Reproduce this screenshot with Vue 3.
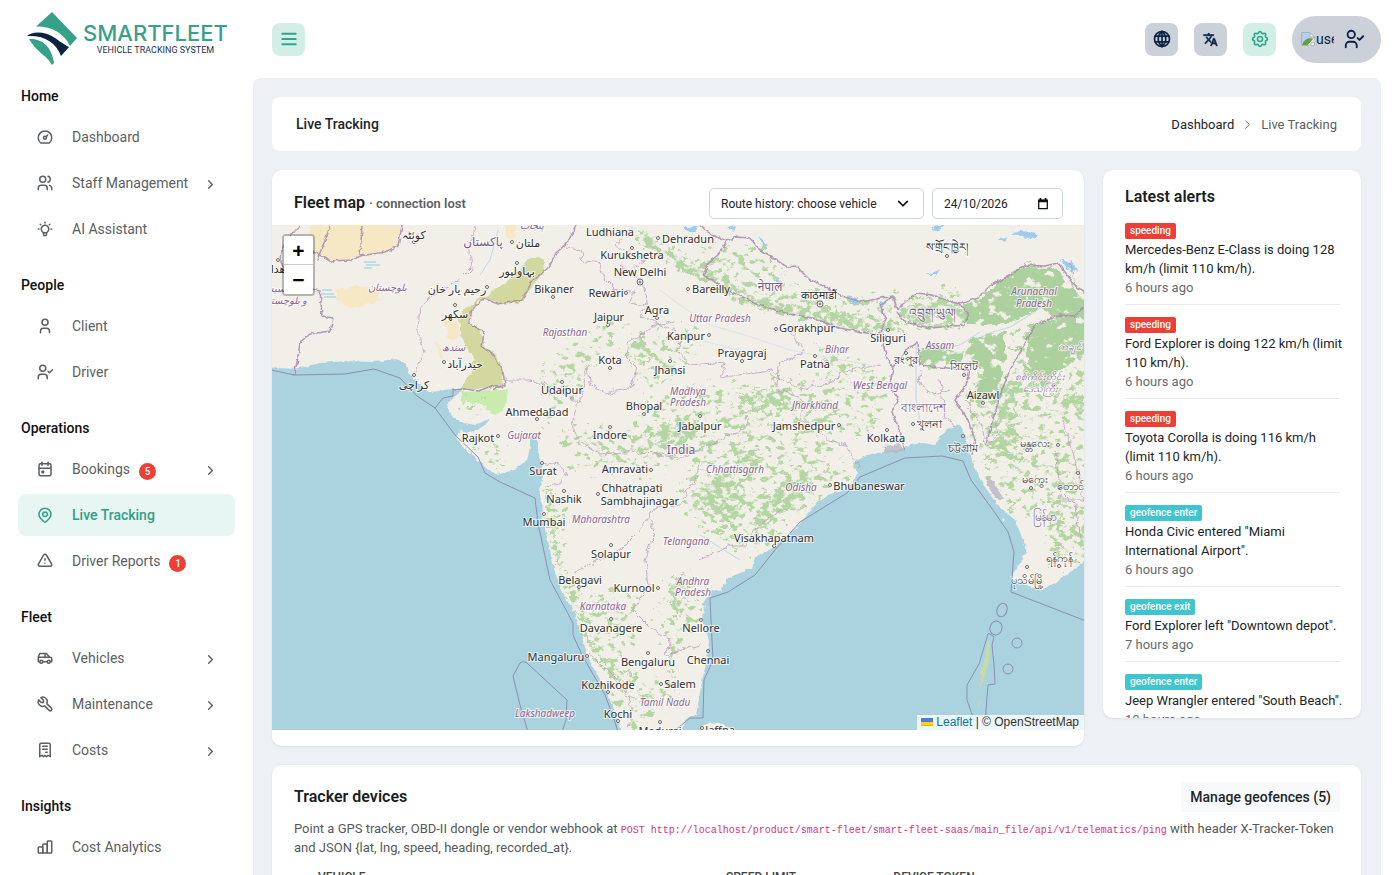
<script setup>
import { ref } from 'vue'

const paths = {
  gauge: ['M10 13a2 2 0 1 0 4 0a2 2 0 1 0 -4 0', 'M13.45 11.55l2.05 -2.05', 'M6.4 20a9 9 0 1 1 11.2 0z'],
  users: ['M5 7a4 4 0 1 0 8 0a4 4 0 1 0 -8 0', 'M3 21v-2a4 4 0 0 1 4 -4h4a4 4 0 0 1 4 4v2', 'M16 3.13a4 4 0 0 1 0 7.75', 'M21 21v-2a4 4 0 0 0 -3 -3.85'],
  bulb: ['M3 12h1m8 -9v1m8 8h1m-15.4 -6.4l.7 .7m12.1 -.7l-.7 .7', 'M9 16a5 5 0 1 1 6 0a3.5 3.5 0 0 0 -1 3a2 2 0 0 1 -4 0a3.5 3.5 0 0 0 -1 -3', 'M9.7 17l4.6 0'],
  user: ['M8 7a4 4 0 1 0 8 0a4 4 0 0 0 -8 0', 'M6 21v-2a4 4 0 0 1 4 -4h4a4 4 0 0 1 4 4v2'],
  userCheck: ['M5 7a4 4 0 1 0 8 0a4 4 0 1 0 -8 0', 'M3 21v-2a4 4 0 0 1 4 -4h4a4 4 0 0 1 4 4v2', 'M16 11l2 2l4 -4'],
  calendar: ['M4 7a2 2 0 0 1 2 -2h12a2 2 0 0 1 2 2v12a2 2 0 0 1 -2 2h-12a2 2 0 0 1 -2 -2z', 'M16 3v4', 'M8 3v4', 'M4 11h16', 'M8 15h2v2h-2z'],
  pin: ['M9 11a3 3 0 1 0 6 0a3 3 0 1 0 -6 0', 'M17.657 16.657l-4.243 4.243a2 2 0 0 1 -2.827 0l-4.244 -4.243a8 8 0 1 1 11.314 0z'],
  alert: ['M12 9v2m0 4v.01', 'M5 19h14a2 2 0 0 0 1.84 -2.75l-7.1 -12.25a2 2 0 0 0 -3.5 0l-7.1 12.25a2 2 0 0 0 1.75 2.75'],
  car: ['M5 17a2 2 0 1 0 4 0a2 2 0 1 0 -4 0', 'M15 17a2 2 0 1 0 4 0a2 2 0 1 0 -4 0', 'M5 17h-2v-6l2 -5h9l4 5h1a2 2 0 0 1 2 2v4h-2m-4 0h-6m-6 -6h15m-6 0v-5'],
  tool: ['M7 10h3v-3l-3.5 -3.5a6 6 0 0 1 8 8l6 6a2 2 0 0 1 -3 3l-6 -6a6 6 0 0 1 -8 -8l3.5 3.5'],
  receipt: ['M5 21v-16a2 2 0 0 1 2 -2h10a2 2 0 0 1 2 2v16l-3 -2l-2 2l-2 -2l-2 2l-2 -2l-3 2', 'M9 7h6', 'M9 11h6', 'M13 15h2'],
  bars: ['M3 13a1 1 0 0 1 1 -1h4a1 1 0 0 1 1 1v7h-5a1 1 0 0 1 -1 -1z', 'M9 9a1 1 0 0 1 1 -1h4a1 1 0 0 1 1 1v11h-6z', 'M15 5a1 1 0 0 1 1 -1h4a1 1 0 0 1 1 1v14a1 1 0 0 1 -1 1h-5z'],
  gear: ['M10.325 4.317c.426 -1.756 2.924 -1.756 3.35 0a1.724 1.724 0 0 0 2.573 1.066c1.543 -.94 3.31 .826 2.37 2.37a1.724 1.724 0 0 0 1.065 2.572c1.756 .426 1.756 2.924 0 3.35a1.724 1.724 0 0 0 -1.066 2.573c.94 1.543 -.826 3.31 -2.37 2.37a1.724 1.724 0 0 0 -2.572 1.065c-.426 1.756 -2.924 1.756 -3.35 0a1.724 1.724 0 0 0 -2.573 -1.066c-1.543 .94 -3.31 -.826 -2.37 -2.37a1.724 1.724 0 0 0 -1.065 -2.572c-1.756 -.426 -1.756 -2.924 0 -3.35a1.724 1.724 0 0 0 1.066 -2.573c-.94 -1.543 .826 -3.31 2.37 -2.37c1 .608 2.296 .07 2.572 -1.065z', 'M9 12a3 3 0 1 0 6 0a3 3 0 1 0 -6 0'],
  globe: ['M3 12a9 9 0 1 0 18 0a9 9 0 1 0 -18 0', 'M12 3v18', 'M4 8.500h16', 'M4 15.500h16', 'M12 3c-6 5 -6 13 0 18', 'M12 3c6 5 6 13 0 18']
}

const menu = [
  { title: 'Home', items: [{ label: 'Dashboard', icon: 'gauge' }, { label: 'Staff Management', icon: 'users', sub: true }, { label: 'AI Assistant', icon: 'bulb' }] },
  { title: 'People', items: [{ label: 'Client', icon: 'user' }, { label: 'Driver', icon: 'userCheck' }] },
  { title: 'Operations', items: [{ label: 'Bookings', icon: 'calendar', sub: true, count: 5 }, { label: 'Live Tracking', icon: 'pin', active: true }, { label: 'Driver Reports', icon: 'alert', count: 1 }] },
  { title: 'Fleet', items: [{ label: 'Vehicles', icon: 'car', sub: true }, { label: 'Maintenance', icon: 'tool', sub: true }, { label: 'Costs', icon: 'receipt', sub: true }] },
  { title: 'Insights', items: [{ label: 'Cost Analytics', icon: 'bars' }] }
]

const alerts = [
  { type: 'speeding', text: 'Mercedes-Benz E-Class is doing 128 km/h (limit 110 km/h).', ago: '6 hours ago' },
  { type: 'speeding', text: 'Ford Explorer is doing 122 km/h (limit 110 km/h).', ago: '6 hours ago' },
  { type: 'speeding', text: 'Toyota Corolla is doing 116 km/h (limit 110 km/h).', ago: '6 hours ago' },
  { type: 'geofence enter', text: 'Honda Civic entered "Miami International Airport".', ago: '6 hours ago' },
  { type: 'geofence exit', text: 'Ford Explorer left "Downtown depot".', ago: '7 hours ago' },
  { type: 'geofence enter', text: 'Jeep Wrangler entered "South Beach".', ago: '10 hours ago' }
]

const historyDate = ref('24/10/2026')

// [name, centre x, centre y, dot x, dot y]
const cities = [
  ['Ludhiana', 610, 232], ['Dehradun', 688, 239, 658, 238], ['Kurukshetra', 632, 255, 632, 248],
  ['New Delhi', 640, 272], ['Bikaner', 554, 289, 553, 297], ['Rewari', 606, 293, 626, 293],
  ['Bareilly', 711, 289, 688, 289], ['Jaipur', 609, 317, 608, 325], ['Agra', 657, 310, 657, 318],
  ['Gorakhpur', 807, 328, 776, 329], ['Kanpur', 686, 336, 709, 335], ['Prayagraj', 742, 353, 742, 361],
  ['Kota', 610, 360, 610, 368], ['Jhansi', 670, 370, 670, 361], ['Patna', 815, 364, 815, 356],
  ['Siliguri', 888, 338, 888, 330], ['Udaipur', 562, 390, 562, 382], ['Ahmedabad', 537, 412, 537, 419],
  ['Bhopal', 644, 406, 644, 414], ['Indore', 610, 435, 610, 427], ['Jabalpur', 700, 426, 700, 416],
  ['Jamshedpur', 804, 426, 839, 425], ['Aizawl', 983, 395, 983, 403], ['Kolkata', 886, 438, 887, 430],
  ['Rajkot', 478, 438, 498, 436], ['Surat', 543, 471, 542, 463], ['Amravati', 625, 469, 651, 470],
  ['Nashik', 564, 499, 564, 491], ['Chhatrapati', 632, 488], ['Sambhajinagar', 640, 501, 598, 494],
  ['Mumbai', 544, 522, 544, 514], ['Solapur', 611, 554, 611, 545], ['Belagavi', 580, 580, 579, 587],
  ['Kurnool', 634, 588, 658, 588], ['Davanagere', 611, 628, 611, 619], ['Nellore', 701, 628, 701, 620],
  ['Mangaluru', 556, 657, 587, 656], ['Bengaluru', 648, 662, 648, 653], ['Chennai', 708, 660, 708, 651],
  ['Kozhikode', 608, 685, 608, 692], ['Salem', 680, 684, 661, 684], ['Kochi', 618, 714, 618, 721],
  ['Madurai', 660, 731, 660, 722], ['Jaffna', 720, 730, 702, 728], ['Bhubaneswar', 869, 486, 830, 485],
  ['Visakhapatnam', 774, 538, 774, 546],
  ['کوئٹہ', 414, 235, 414, 242], ['ملتان', 528, 243, 512, 242], ['بہاولپور', 517, 271, 517, 263],
  ['رحیم یار خان', 457, 289, 487, 287], ['سکھر', 455, 314, 455, 305], ['حیدرآباد', 465, 364, 444, 362],
  ['کراچی', 414, 385, 414, 375], ['هدا', 278, 269, 278, 260],
  ['काठमाडौं', 819, 295], ['ས་གྲོང་ཁྱེར།', 947, 247, 947, 256],
  ['রংপুর', 906, 360, 906, 353], ['সিলেট', 964, 366, 964, 375], ['খুলনা', 929, 424, 913, 424],
  ['চট্টগ্রাম', 963, 448, 963, 436], ['မန္တလေး', 1035, 443, 1058, 445], ['မကွေး', 1035, 479, 1031, 488],
  ['တောင်', 1070, 486, 1078, 473], ['ရန်ကုန်', 1059, 558, 1059, 566], ['ပုသိမ်မြို့', 1027, 580, 1027, 567]
]

const regions = [
  ['Rajasthan', 565, 332], ['Uttar Pradesh', 720, 318], ['Bihar', 837, 349], ['Assam', 940, 345],
  ['West Bengal', 880, 385], ['Jharkhand', 815, 405], ['Madhya', 688, 391], ['Pradesh', 688, 402],
  ['Gujarat', 524, 435], ['Maharashtra', 601, 519], ['Telangana', 686, 541], ['Andhra', 693, 581],
  ['Pradesh', 693, 592], ['Karnataka', 603, 606], ['Tamil Nadu', 665, 702], ['Lakshadweep', 545, 713],
  ['Odisha', 801, 487], ['Chhattisgarh', 735, 469], ['Arunachal', 1034, 291], ['Pradesh', 1034, 303],
  ['بلوچستان', 387, 287], ['سندھ', 453, 347], ['سیستان', 268, 288], ['و بلوچستان', 284, 300], ['پنجاب', 532, 225],
  ['ကချင်', 1070, 346], ['စစ်ကိုင်းတိုင်း', 1040, 376], ['ဒေသကြီး', 1040, 388]
]

const countries = [
  ['India', 681, 450], ['پاکستان', 483, 242], ['नेपाल', 770, 287], ['འབྲུག་ཡུལ།', 932, 313],
  ['বাংলাদেশ', 923, 408], ['မြန်မာ', 1044, 517]
]

const sea = 'M262 367L295 369L320 363L347 361L373 362L397 359L406 364L408 373L417 382L430 392L452 389L464 390L458 394L450 400L446 405L452 416L463 423L476 425L490 418L483 427L470 433L460 430L456 437L463 447L480 462L492 472L500 474L514 470L527 460L530 447L530 437L534 434L537 443L540 460L542 467L543 480L539 490L542 503L543 520L550 550L555 573L563 593L575 613L582 637L588 657L598 677L607 690L613 710L622 731L683 731L685 720L696 715L698 705L700 693L703 676L707 660L709 640L703 620L705 600L712 590L720 592L728 578L752 568L755 557L773 548L797 527L817 503L827 495L847 490L858 473L853 463L867 455L883 452L897 450L910 445L923 443L935 445L942 435L949 428L960 425L966 438L970 453L973 465L982 483L1000 507L1015 520L1022 537L1027 550L1020 563L1010 578L1025 585L1040 590L1055 583L1077 567L1094 555V740H262V367Z'

const forest = [
  'M965 306L982 296L1000 282L1025 265L1050 266L1062 275L1075 290L1090 305L1090 320L1060 318L1040 308L1018 320L990 324L968 325Z',
  'M920 346L945 348L965 352L960 365L930 368L920 362Z',
  'M975 335L1005 334L1005 355L1000 385L990 400L970 400L985 370L965 360Z',
  'M1030 325L1060 318L1090 316V350L1060 370L1045 385L1025 375Z'
]
const wooded = [
  'M633 226L650 233L672 250L700 264L720 277L745 291L780 302L800 305L840 312L880 320L900 322L900 335L860 330L820 322L780 314L740 302L700 282L668 262L640 242Z',
  'M905 315L915 300L940 296L970 312L968 325L930 328L905 325Z',
  'M1000 385L1020 380L1016 430L1022 465L1008 460L990 410Z',
  'M1062 400L1075 390L1090 410H1062Z', 'M1050 500L1060 500L1065 545H1055Z', 'M1076 520L1090 520V560H1078Z',
  'M580 625L600 650L618 672L640 670L628 685L610 672L594 655Z',
  'M712 475L728 470L738 490L745 500L735 525L722 525L705 505L698 495Z', 'M735 452L760 448L758 470L738 468Z',
  'M780 486L800 470L812 478L800 505L775 515L760 530L755 515Z', 'M985 440L1010 435L1008 462L996 455Z',
  'M545 490L555 500L560 560L580 600L592 630L580 620L565 585L550 540Z', 'M640 440L680 415L700 430L680 450Z',
  'M630 342L645 335L650 360L632 358ZM740 395L780 390L790 408L750 410Z', 'M672 582L682 575L680 610L672 620Z'
]
const sparse = [
  'M640 405L700 388L760 385L840 372L855 390L830 450L800 490L775 540L745 550L700 530L680 500L690 455L640 440Z',
  'M700 245L760 250L800 290L880 300L960 290L965 320L880 325L780 310L700 280Z',
  'M545 480L560 500L560 560L575 600L590 640L625 675L640 725L618 705L596 665L565 585L548 530Z',
  'M665 582L690 570L700 600L685 650L640 690L625 725L650 728L680 680L660 625Z',
  'M545 370L605 320L625 325L600 360L560 400L545 440Z', 'M630 340L700 330L670 380L640 390Z',
  'M560 430L640 430L690 460L640 470L570 470Z', 'M640 600L620 670L580 630L590 590Z',
  'M960 370H1040V520L1010 510L980 460Z', 'M1040 480H1090V560H1050Z', 'M1010 330H1090V480H1030Z',
  'M820 340L890 385L870 440L830 430Z', 'M470 440L500 445L505 470L485 458Z', 'M460 400L490 402L485 412L460 412Z',
  'M735 485L800 465L860 460L840 488L800 510L750 550Z'
]
const borders = [
  'M300 226L290 236L282 247L281 262L290 284L320 291L322 316L333 318L330 331L310 334L300 342L298 358L294 375',
  'M294 240L330 261L350 260L360 256L385 252L398 246L402 226',
  'M330 226L326 238L317 260', 'M362 226L360 256', 'M492 390L505 385L503 372L493 354L482 347L484 332L474 327L469 323L472 310L484 298L497 304L521 301L533 280L548 268L556 253L567 243L577 225',
  'M452 390L465 389L478 391L492 386L503 387',
  'M700 226L712 235L727 241L735 237L750 238L760 250L776 260L787 267L796 266L810 280L820 284L842 296L862 302L876 299L893 296L897 310L906 301L918 293L932 295L952 302L960 304L978 298L990 286L1010 275L1025 265L1045 266L1058 263L1075 285L1090 297',
  'M727 241L718 255L709 262L703 275L730 291L758 305L790 314L812 318L840 328L878 335L886 320L880 305L892 297',
  'M897 312L905 322L930 328L965 325L968 312L958 303',
  'M886 335L883 345L888 360L893 368L890 385L898 400L892 412L899 430L905 450', 'M893 367L908 348L918 343L920 365L948 368L970 370L966 385L955 400L968 420L975 440L972 455',
  'M986 445L990 430L1000 395L1010 370L1027 340L1035 325L1060 315L1075 316L1090 300'
]
const states = [
  'M566 248L580 250L583 261L600 264L606 280L617 291L634 292L630 302L646 305L640 316L660 325L683 335L676 350L690 365L725 362L720 378L770 370L800 390L840 380L838 372L880 365',
  'M646 305L645 284L634 275L620 265', 'M676 322L655 325L630 340L625 355L636 366L632 388L605 393L590 383L588 365L580 402L572 420L577 440L600 455L640 452L680 458L720 440L745 428L748 415',
  'M503 380L530 380L555 388L565 395L583 405', 'M540 462L560 465L567 475L560 485L545 487', 'M575 572L600 560L620 550L640 530L655 508L680 505L695 480L700 460',
  'M648 520L655 530L645 560L648 585L632 610L650 628L670 640L665 655L700 645', 'M700 560L712 555L730 545L745 545L760 525L780 510', 'M860 468L845 445L830 440L800 420L805 400L780 390L768 372',
  'M790 330L803 352L778 365L777 385', 'M590 655L610 672L625 690L632 710L628 728', 'M920 370L918 383L935 395L950 390', 'M1070 260L1075 285', 'M940 380L945 420L955 425', 'M1000 410L995 440L985 445L982 425L965 400',
  'M1055 450L1060 490L1075 505L1080 540M1060 500H1084L1070 440L1062 420', 'M475 226L470 250L472 268L460 280L435 295L420 305L418 330L424 352L414 375', 'M632 230L615 245L634 255L645 262L620 275'
]
const maritime = [
  'M262 368L294 375L345 374L374 369L400 378L417 396L435 408L455 435L478 457L485 473L500 482L535 498L538 523L550 580L573 623L573 635L582 655L605 695L613 716L618 732',
  'M435 408L443 398L453 396V388', 'M673 732L690 718H703L704 680L713 660L711 620L710 598L728 592L755 575L775 550L800 522L847 493L860 477L905 458L942 456L963 461L971 480L993 510L1008 532L1014 552L1011 592L1086 621',
  'M520 663L513 676L520 705L528 732M520 663Q524 660 528 664L567 700L566 720L562 732',
  'M988 634L979 664L967 685L967 700L974 720L985 722L988 685L995 684L994 665L992 645L994 637Q988 632 988 634'
]
</script>

<template>
  <div class="shell">
    <aside class="sidebar">
      <a class="brand" href="#" aria-label="SmartFleet">
        <svg class="brand-mark" viewBox="0 0 51 53" aria-hidden="true">
          <path fill="#36a189" d="M25 0L50 26L43 34C37 21 24 14 9 14.500Z" />
          <path fill="#0b2245" d="M0 24C5 19 18 19 28 26C35 31 40 34 42 35L34 44C29 30 17 23 0 24Z" />
          <path fill="#36a189" d="M2 27C15 26 25 35 27 51L25 53C20 43 12 43 2 27Z" />
        </svg>
        <span class="brand-words">
          <span class="brand-name">SMARTFLEET</span>
          <span class="brand-tag">VEHICLE TRACKING SYSTEM</span>
        </span>
      </a>
      <nav>
        <section v-for="group in menu" :key="group.title" class="group">
          <h2>{{ group.title }}</h2>
          <a v-for="item in group.items" :key="item.label" href="#" class="item" :class="{ active: item.active }">
            <svg class="icon" viewBox="0 0 24 24"><path v-for="d in paths[item.icon]" :key="d" :d="d" /></svg>
            <span>{{ item.label }}</span>
            <b v-if="item.count" class="count">{{ item.count }}</b>
            <svg v-if="item.sub" class="caret" viewBox="0 0 24 24"><path d="M8 4l8 8l-8 8" /></svg>
          </a>
        </section>
      </nav>
    </aside>

    <div class="page">
      <header class="topbar">
        <button class="square mint" aria-label="Toggle menu">
          <svg class="burger" viewBox="0 0 24 24"><path d="M2 4h20M2 12h20M2 20h20" /></svg>
        </button>
        <div class="tools">
          <button class="square" aria-label="Website"><svg class="icon big" viewBox="0 0 24 24"><path v-for="d in paths.globe" :key="d" :d="d" /></svg></button>
          <button class="square" aria-label="Language">
            <svg class="translate" viewBox="0 0 24 24"><path d="M12.870 15.070l-2.540-2.510.030-.030c1.740-1.940 2.980-4.170 3.710-6.530H17V4h-7V2H8v2H1v1.990h11.170C11.500 7.920 10.440 9.750 9 11.350 8.070 10.320 7.300 9.190 6.690 8h-2c.73 1.630 1.730 3.170 2.980 4.560l-5.090 5.020L4 19l5-5 3.110 3.110.76-2.040zM18.500 10h-2L12 22h2l1.120-3h4.750L21 22h2l-4.500-12zm-2.620 7l1.620-4.330L19.120 17h-3.240z" /></svg>
          </button>
          <button class="square mint" aria-label="Settings"><svg class="icon big" viewBox="0 0 24 24"><path v-for="d in paths.gear" :key="d" :d="d" /></svg></button>
          <button class="profile" aria-label="Account">
            <span class="avatar">
              <svg viewBox="0 0 16 16" aria-hidden="true">
                <path fill="#fff" stroke="#a8b0ba" d="M1.500 1.500H10L14.500 6V14.500H1.500Z" />
                <path fill="#b9cdf5" d="M2 2H10V6H14V8L8 9L2 13Z" />
                <path fill="#5aa63b" d="M2 14C4 8 9 6 13 8L8 14Z" />
                <path fill="#fff" stroke="#a8b0ba" d="M10 1.500V6H14.500Z" />
                <path stroke="#ccd1d9" stroke-width="2" d="M9 15L15 9" />
              </svg>
              <span>user</span>
            </span>
            <svg class="icon check" viewBox="0 0 24 24"><path v-for="d in paths.userCheck" :key="d" :d="d" /></svg>
          </button>
        </div>
      </header>

      <main class="content">
        <div class="card crumbs">
          <h1>Live Tracking</h1>
          <nav class="trail" aria-label="Breadcrumb">
            <a href="#">Dashboard</a>
            <svg class="caret" viewBox="0 0 24 24"><path d="M8 4l8 8l-8 8" /></svg>
            <span>Live Tracking</span>
          </nav>
        </div>

        <div class="columns">
          <section class="card map-card">
            <div class="map-head">
              <h3>Fleet map <small>· connection lost</small></h3>
              <div class="filters">
                <select aria-label="Route history"><option>Route history: choose vehicle</option></select>
                <label class="date">
                  <input v-model="historyDate" type="text" aria-label="Route date" />
                  <svg viewBox="0 0 14 14" aria-hidden="true"><path fill="none" stroke="#111" stroke-width="1.500" d="M2 2.500H12V12.500H2Z" /><path fill="#111" d="M2 2H12V5H2ZM3 0H5V3H3ZM9 0H11V3H9Z" /></svg>
                </label>
              </div>
            </div>
            <div class="map">
              <svg class="tiles" viewBox="272 225 812 505" preserveAspectRatio="xMidYMid slice">
                <defs>
                  <filter id="rough" x="0" y="0" width="100%" height="100%">
                    <feTurbulence type="fractalNoise" baseFrequency="0.12" numOctaves="3" seed="4" />
                    <feDisplacementMap in="SourceGraphic" scale="8" xChannelSelector="R" yChannelSelector="G" />
                  </filter>
                  <filter id="coast" x="0" y="0" width="100%" height="100%">
                    <feTurbulence type="fractalNoise" baseFrequency="0.2" numOctaves="2" seed="9" />
                    <feDisplacementMap in="SourceGraphic" scale="4" xChannelSelector="R" yChannelSelector="G" />
                  </filter>
                  <filter id="patchy" x="0" y="0" width="100%" height="100%">
                    <feTurbulence type="fractalNoise" baseFrequency="0.13 0.17" numOctaves="4" seed="7" result="n" />
                    <feColorMatrix in="n" type="matrix" values="0 0 0 0 0  0 0 0 0 0  0 0 0 0 0  9 0 0 0 -4.900" result="m" />
                    <feDisplacementMap in="SourceGraphic" in2="n" scale="36" xChannelSelector="G" yChannelSelector="B" result="d" />
                    <feComposite in="d" in2="m" operator="in" />
                  </filter>
                  <filter id="medium" x="0" y="0" width="100%" height="100%">
                    <feTurbulence type="fractalNoise" baseFrequency="0.13 0.16" numOctaves="4" seed="21" result="n" />
                    <feColorMatrix in="n" type="matrix" values="0 0 0 0 0  0 0 0 0 0  0 0 0 0 0  7 0 0 0 -2.900" result="m" />
                    <feDisplacementMap in="SourceGraphic" in2="n" scale="20" xChannelSelector="G" yChannelSelector="B" result="d" />
                    <feComposite in="d" in2="m" operator="in" />
                  </filter>
                  <filter id="thick" x="0" y="0" width="100%" height="100%">
                    <feTurbulence type="fractalNoise" baseFrequency="0.08 0.1" numOctaves="4" seed="12" result="n" />
                    <feColorMatrix in="n" type="matrix" values="0 0 0 0 0  0 0 0 0 0  0 0 0 0 0  12 0 0 0 -3.600" result="m" />
                    <feDisplacementMap in="SourceGraphic" in2="n" scale="14" xChannelSelector="G" yChannelSelector="B" result="d" />
                    <feComposite in="d" in2="m" operator="in" />
                  </filter>
                </defs>
                <rect x="262" y="215" width="832" height="525" fill="#f2efe9" />
                <g filter="url(#rough)">
                  <rect x="262" y="215" width="832" height="525" fill="none" />
                  <path fill="#f6e8c4" d="M312 215H402L398 246L380 253L358 258L330 262L310 250ZM335 290L355 286L380 290L378 302L350 308L335 298ZM445 322L458 320L460 338L446 338ZM505 226L518 226L512 240L505 238ZM434 340L442 350L444 360L438 355Z" />
                  <path fill="#d3d89e" d="M460 320L462 310L475 302L490 292L505 284L522 266L536 256L545 262L546 272L534 283L522 302L498 303L484 298L473 310L469 323L481 330L484 346L494 354L504 374L503 387L458 389L470 375L474 358L462 340Z" />
                  <path fill="#c9ecae" d="M460 392L490 390L508 390L505 412L492 414L485 405L462 400Z" />
                </g>
                <g filter="url(#patchy)" fill="#b4d6a0">
                  <rect x="262" y="215" width="832" height="525" fill="none" />
                  <path v-for="d in sparse" :key="d" :d="d" />
                </g>
                <g filter="url(#medium)" fill="#b2d5a2">
                  <rect x="262" y="215" width="832" height="525" fill="none" />
                  <path v-for="d in wooded" :key="d" :d="d" />
                </g>
                <g filter="url(#thick)" fill="#add19e">
                  <rect x="262" y="215" width="832" height="525" fill="none" />
                  <path v-for="d in forest" :key="d" :d="d" />
                </g>
                <g fill="none" stroke="#9dc9e6" stroke-width="1" opacity="0.6">
                  <path d="M975 340L990 333L1010 327L1030 315L1045 305M940 350L960 345L980 332M916 345V400L920 420M498 230L490 260L480 275M700 535L740 560" />
                  <path opacity="0.5" d="M660 290L680 305L710 325L745 335L790 350L830 358L870 365M700 340L745 352" />
                </g>
                <g fill="#9ccdf0" filter="url(#rough)">
                  <rect x="262" y="215" width="832" height="525" fill="none" />
                  <path d="M683 226L698 226L695 232L685 230ZM728 228L736 226L734 232ZM1010 233L1030 231L1038 234L1034 240L1018 236ZM1000 238L1008 237L1004 242ZM1060 260L1076 266L1078 272L1066 268ZM930 227L945 226L938 232ZM772 280L780 277L778 282ZM847 295L858 298L855 304ZM880 300L886 302L882 308ZM925 275L940 270L938 275ZM760 238L766 246L762 246Z" />
                </g>
                <g fill="none" stroke="#8fcbe0" stroke-width="1"><path d="M364 262H376M366 265H380M364 268H372M322 290H332M320 294H334M324 297H336" /></g>
                <g filter="url(#coast)">
                  <rect x="262" y="215" width="832" height="525" fill="none" />
                  <path fill="#aad3df" :d="sea" />
                  <path fill="#f2efe9" d="M701 731L706 723L722 724L736 731ZM1001 518L1006 520L1003 522Z" />
                  <path fill="#c9d9a9" d="M987 642L990 640L989 660L984 680L980 690L981 670L985 658ZM977 703L980 702L978 708Z" />
                  <path fill="#b9b5c4" opacity="0.8" d="M883 446L900 444L904 452L886 453ZM985 477L992 480L1000 492L1004 500L998 500L990 490Z" />
                </g>
                <g fill="none" stroke="#a689ac" stroke-width="1.500" stroke-linejoin="round" opacity="0.85" filter="url(#coast)"><rect x="262" y="215" width="832" height="525" stroke="none" /><path v-for="d in borders" :key="d" :d="d" /></g>
                <g fill="none" stroke="#b79bb9" stroke-width="1" opacity="0.75" filter="url(#rough)"><rect x="262" y="215" width="832" height="525" stroke="none" /><path v-for="d in states" :key="d" :d="d" /></g>
                <g fill="none" stroke="#8c8fb5" stroke-width="1" stroke-linejoin="round">
                  <path v-for="d in maritime" :key="d" :d="d" />
                  <ellipse cx="1002" cy="610" rx="5" ry="7" transform="rotate(20 1002 610)" /><ellipse cx="996" cy="628" rx="6" ry="7" transform="rotate(20 996 628)" />
                  <circle cx="1017" cy="643" r="5" /><circle cx="1008" cy="669" r="5" />
                </g>
                <g fill="#fff" stroke="#666" stroke-width="1">
                  <template v-for="c in cities" :key="c[0]"><circle v-if="c[3]" :cx="c[3]" :cy="c[4]" r="1.500" /></template>
                  <circle cx="640" cy="282" r="3" /><circle cx="820" cy="304" r="3" />
                  <circle cx="640" cy="282" r="1" /><circle cx="820" cy="304" r="1" />
                </g>
                <g class="state-label"><text v-for="(r, i) in regions" :key="i" :x="r[1]" :y="r[2] + 4">{{ r[0] }}</text></g>
                <g class="city-label"><text v-for="c in cities" :key="c[0]" :x="c[1]" :y="c[2] + 4">{{ c[0] }}</text></g>
                <g class="country-label"><text v-for="c in countries" :key="c[0]" :x="c[1]" :y="c[2] + 4">{{ c[0] }}</text></g>
              </svg>
              <div class="zoom">
                <button aria-label="Zoom in">+</button>
                <button aria-label="Zoom out">−</button>
              </div>
              <div class="credit">
                <svg viewBox="0 0 12 8" aria-hidden="true"><path fill="#4c7be1" d="M0 0h12v4H0z" /><path fill="#ffd500" d="M0 4h12v3H0z" /><path fill="#e0bc00" d="M0 7h12v1H0z" /></svg>
                <a href="#">Leaflet</a> | © OpenStreetMap
              </div>
            </div>
          </section>

          <section class="card alerts">
            <h3>Latest alerts</h3>
            <ul>
              <li v-for="(a, i) in alerts" :key="i">
                <span class="tag" :class="{ geo: a.type !== 'speeding' }">{{ a.type }}</span>
                <p>{{ a.text }}</p>
                <time>{{ a.ago }}</time>
              </li>
            </ul>
          </section>
        </div>

        <section class="card devices">
          <div class="devices-head">
            <h3>Tracker devices</h3>
            <button>Manage geofences (5)</button>
          </div>
          <p>Point a GPS tracker, OBD-II dongle or vendor webhook at <code>POST http://localhost/product/smart-fleet/smart-fleet-saas/main_file/api/v1/telematics/ping</code> with header X-Tracker-Token and JSON {lat, lng, speed, heading, recorded_at}.</p>
          <table>
            <thead><tr><th>Vehicle</th><th>Speed limit</th><th>Device token</th></tr></thead>
          </table>
        </section>
      </main>
    </div>
  </div>
</template>

<style>
body { margin: 0; background: #fff; }
</style>

<style scoped>
* { box-sizing: border-box; }
.shell { display: flex; height: 100vh; overflow: hidden; font-family: Roboto, "Noto Sans", sans-serif; font-size: 13px; color: #212529; }
h1, h2, h3, p, ul { margin: 0; padding: 0; }
a { color: inherit; text-decoration: none; }
button { font-family: inherit; border: 0; padding: 0; cursor: pointer; }
.icon, .caret, .burger { fill: none; stroke: currentColor; stroke-width: 2; stroke-linecap: round; stroke-linejoin: round; flex: none; }
.icon { width: 18px; height: 18px; }
.icon.big { width: 20px; height: 20px; }
.caret { width: 11px; height: 11px; stroke-width: 3; }

.sidebar { flex: none; width: 253px; overflow: hidden; }
.brand { display: flex; gap: 5px; height: 78px; padding: 12px 0 0 27px; }
.brand-mark { width: 51px; height: 53px; }
.brand-words { display: flex; flex-direction: column; align-items: center; padding-top: 9px; }
.brand-name { font: 500 22px/24px Inter, sans-serif; color: #36a189; }
.brand-tag { font-size: 9px; line-height: 11px; color: #1d3150; }
.group { padding: 0 18px; margin-bottom: 17px; }
.group h2 { padding: 0 0 2px 3px; font-size: 14px; line-height: 36px; font-weight: 500; color: #111; }
.item { display: flex; align-items: center; height: 42px; margin-bottom: 4px; padding: 0 19px 0 18px; border-radius: 8px; font-size: 14px; color: #5b5f63; }
.item > span { margin-left: 18px; }
.item .caret { margin: 3px 0 0 auto; }
.item.active { background: #e8f6f3; color: #2f9f86; font-weight: 500; }
.count { display: grid; place-items: center; width: 17px; height: 17px; margin: 4px 0 0 9px; border-radius: 50%; background: #ee3f36; color: #fff; font-size: 10px; font-weight: 500; }

.page { flex: 1; min-width: 0; display: flex; flex-direction: column; padding-right: 19px; }
.topbar { flex: none; height: 78px; display: flex; align-items: center; justify-content: space-between; padding-left: 19px; }
.square { display: grid; place-items: center; width: 33px; height: 33px; border-radius: 8px; background: #ccd1d9; color: #0b2245; }
.square.mint { background: #d3eee7; color: #2fa58b; }
.burger { width: 16px; height: 16px; stroke-width: 3; }
.translate { width: 15px; height: 15px; fill: currentColor; stroke: currentColor; }
.tools { display: flex; align-items: center; gap: 16px; }
.profile { display: flex; align-items: center; width: 89px; height: 47px; padding-left: 8px; gap: 9px; border-radius: 24px; background: #ccd1d9; color: #0b2245; }
.avatar { display: flex; align-items: center; width: 34px; height: 32px; border-radius: 16px; overflow: hidden; font-size: 14px; }
.avatar svg { flex: none; width: 16px; height: 16px; fill: none; }
.icon.check { width: 22px; height: 22px; }

.content { flex: 1; min-height: 0; overflow-y: auto; scrollbar-width: none; padding: 19px 20px 0 19px; border-radius: 8px 8px 0 0; background: #edf0f4; }
.card { background: #fff; border-radius: 10px; box-shadow: 0 1px 3px rgba(30, 50, 80, 0.08); }
.crumbs { display: flex; align-items: center; justify-content: space-between; height: 54px; padding: 0 24px; border-radius: 8px; box-shadow: none; }
h1 { font-size: 14px; font-weight: 500; }
.trail { display: flex; align-items: center; gap: 8px; }
.trail span { color: #5b5f63; }
.trail .caret { stroke-width: 2; color: #5b5f63; }
.columns { display: grid; grid-template-columns: repeat(4, 1fr); gap: 19px; align-items: start; margin: 19px 0; }
h3 { font-size: 16px; line-height: 20px; font-weight: 600; color: #1a1d21; }
.map-card { grid-column: span 3; padding-bottom: 16px; }
.map-head { display: flex; align-items: center; justify-content: space-between; padding: 18px 21px 6px 22px; }
h3 small { font-size: 13px; color: #5b5f63; }
.filters { display: flex; gap: 8px; }
select, .date { height: 31px; border: 1px solid #ced4da; border-radius: 5px; background-color: #fff; color: #212529; font: 12px Roboto, sans-serif; }
select { width: 215px; padding: 0 11px; appearance: none; background-image: url("data:image/svg+xml,%3Csvg xmlns='http://www.w3.org/2000/svg' viewBox='0 0 16 16'%3E%3Cpath fill='none' stroke='%23111' stroke-width='2' stroke-linecap='round' stroke-linejoin='round' d='M3 5l5 5 5-5'/%3E%3C/svg%3E"); background-repeat: no-repeat; background-position: right 13px center; background-size: 14px; }
.date { display: flex; align-items: center; width: 131px; padding: 0 13px 0 11px; }
.date input { flex: 1; min-width: 0; padding: 0; border: 0; outline: 0; font: inherit; color: inherit; }
.date svg { width: 12px; height: 12px; }

.map { position: relative; height: 505px; overflow: hidden; background: #aad3df; }
.tiles { display: block; width: 100%; height: 100%; }
.tiles text { text-anchor: middle; font-family: "Noto Sans", "DejaVu Sans", sans-serif; paint-order: stroke; stroke: rgba(255, 255, 255, 0.7); stroke-width: 2px; }
.city-label text { font-size: 11px; fill: #303030; }
.state-label text { font-size: 10px; font-style: italic; fill: #8d6592; }
.country-label text { font-size: 12px; fill: #80598a; }
.zoom { position: absolute; top: 9px; left: 10px; display: flex; flex-direction: column; width: 33px; border: 2px solid rgba(0, 0, 0, 0.25); border-radius: 4px; background-clip: padding-box; }
.zoom button { height: 29px; background: #fff; color: #000; font: 700 21px/29px "Liberation Sans", sans-serif; }
.zoom button:first-child { border-bottom: 1px solid #ccc; border-radius: 2px 2px 0 0; }
.zoom button:last-child { border-radius: 0 0 2px 2px; }
.credit { position: absolute; right: 0; bottom: 0; padding: 0 5px 0 4px; background: rgba(255, 255, 255, 0.8); font: 12px/15px "Liberation Sans", sans-serif; color: #333; }
.credit svg { width: 12px; height: 8px; margin-right: 3px; }
.credit a { color: #0078a8; }

.alerts { height: 548px; padding: 17px 21px 0 22px; overflow: hidden; }
.alerts ul { list-style: none; margin-top: 4px; }
.alerts li { padding: 12px 0 7px; border-bottom: 1px solid #e9ecef; line-height: 19px; }
.alerts p { margin-right: -8px; }
.tag { display: block; width: fit-content; margin-bottom: 1px; padding: 0 5px; border-radius: 2px; background: #ee3f36; color: #fff; font-size: 10px; line-height: 16px; font-weight: 500; }
.tag.geo { background: #3ec5cd; }
.alerts time { display: block; color: #666b70; }

.devices { padding: 17px 21px 20px 22px; }
.devices-head { display: flex; align-items: center; justify-content: space-between; }
.devices-head button { height: 30px; padding: 0 9px; background: #f8f9fa; color: #212529; font-size: 14px; font-weight: 500; }
.devices p { margin-top: 7px; line-height: 19px; color: #55595d; }
code { font: 10px "Liberation Mono", monospace; color: #d63384; }
table { width: 100%; margin-top: 8px; border-collapse: collapse; table-layout: fixed; }
th { padding: 4px 24px; text-align: left; font-size: 12px; font-weight: 500; line-height: 16px; text-transform: uppercase; color: #444; }
th:first-child { width: 39%; }
th:nth-child(2) { width: 16%; }
</style>
